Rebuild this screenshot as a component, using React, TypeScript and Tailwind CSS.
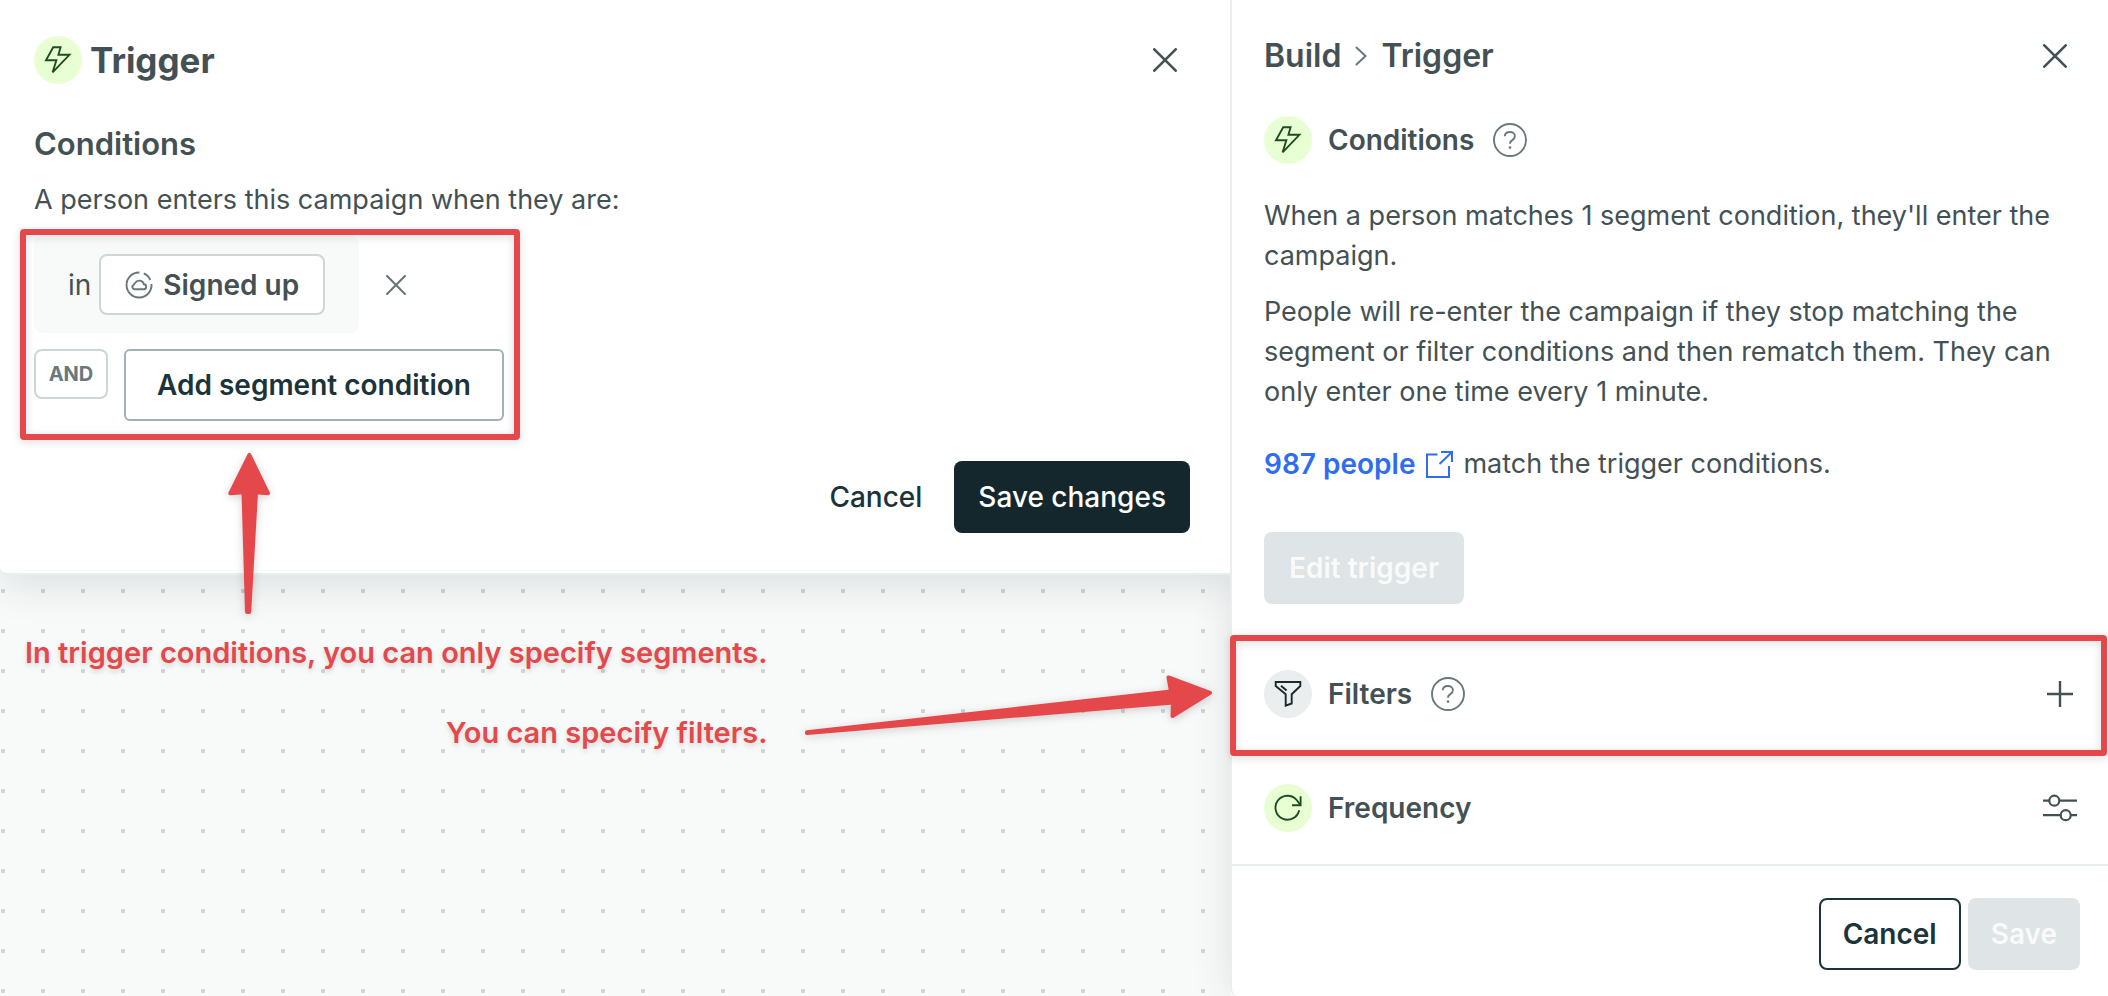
import { useState } from "react";
import type { ReactNode } from "react";

type IconProps = { className?: string };

const CloseIcon = ({ className = "w-6 h-6" }: IconProps) => (
  <svg
    viewBox="0 0 24 24"
    fill="none"
    stroke="currentColor"
    strokeWidth="2.6"
    strokeLinecap="round"
    aria-hidden="true"
    className={className}
  >
    <path d="M1.3 1.3 22.7 22.7M22.7 1.3 1.3 22.7" />
  </svg>
);

const BoltBadge = () => (
  <svg
    viewBox="0 0 48 48"
    fill="none"
    stroke="currentColor"
    strokeWidth="1.9"
    aria-hidden="true"
    className="w-12 h-12 shrink-0 rounded-full bg-[#e8ffd4] text-[#1d4d20]"
  >
    <path d="M19.2 11.2h7.4l-2.2 7.6h11L18.6 36.3l3.8-12H12z" />
  </svg>
);

const FunnelBadge = () => (
  <svg
    viewBox="0 0 48 48"
    fill="none"
    stroke="currentColor"
    strokeWidth="1.9"
    aria-hidden="true"
    className="w-12 h-12 shrink-0 rounded-full bg-[#eaeeef] text-[#1b2a2e]"
  >
    <path d="M11.7 12h24.6v4l-8.6 8.2v9.3l-6 2.2V24.2L11.7 16z" />
    <path d="m17 15.7 5.6 4.8" />
  </svg>
);

const RefreshBadge = () => (
  <svg
    viewBox="0 0 48 48"
    fill="none"
    stroke="currentColor"
    strokeWidth="1.9"
    aria-hidden="true"
    className="w-12 h-12 shrink-0 rounded-full bg-[#e8ffd4] text-[#1d4d20]"
  >
    <path d="M35.2 26.3A12 12 0 1 1 32.5 15.8L36.4 21" />
    <path d="M36.6 12.3v9H28" />
  </svg>
);

const HelpIcon = () => (
  <svg
    viewBox="0 0 34 34"
    fill="none"
    stroke="currentColor"
    strokeWidth="1.9"
    aria-hidden="true"
    className="w-[34px] h-[34px]"
  >
    <circle cx="17" cy="17" r="16" />
    <path d="M11.8 13.2c.2-2.6 2.300-4.200 5.100-4.200 2.900 0 5 1.700 5 4.100 0 2-1 3-2.500 4-1.700 1-2.400 1.800-2.400 3.200v.5" />
    <circle cx="17" cy="24.6" r="1.3" fill="currentColor" stroke="none" />
  </svg>
);

const SegmentIcon = () => (
  <svg
    viewBox="0 0 28 28"
    fill="none"
    stroke="currentColor"
    strokeWidth="1.9"
    aria-hidden="true"
    className="w-7 h-7"
  >
    <path d="M14.500 1.500A12.500 12.500 0 1 0 26.500 13" />
    <path d="M18.800 2.400A12.500 12.500 0 0 1 25.300 9" />
    <path d="M10 18.200h8.500a2.500 2.500 0 0 0 .4-5 4.800 4.800 0 0 0-8.800-1.200 3 3 0 0 0-1.300 1.800 2.300 2.300 0 0 0 1.200 4.400z" />
  </svg>
);

const ExternalIcon = () => (
  <svg
    viewBox="0 0 28 28"
    fill="none"
    stroke="currentColor"
    strokeWidth="2"
    aria-hidden="true"
    className="w-7 h-7"
  >
    <path d="M12.5 4.5H2V27h22V16" />
    <path d="M16 2h11v10M27 2 14.5 14" />
  </svg>
);

const SlidersIcon = () => (
  <svg
    viewBox="0 0 34 28"
    fill="none"
    stroke="currentColor"
    strokeWidth="2.2"
    aria-hidden="true"
    className="w-[34px] h-7"
  >
    <path d="M0 6.700h6M16.500 6.700H34M0 21.200h17.500M28 21.200h6" />
    <circle cx="11.3" cy="6.7" r="5" />
    <circle cx="22.7" cy="21.2" r="5" />
  </svg>
);

const Annotation = ({ className }: { className: string }) => (
  <div
    className={`absolute pointer-events-none border-6 border-[#e5484b] rounded-sm drop-shadow-[0_2px_4px_rgba(0,0,0,0.15)] ${className}`}
  />
);

const PanelRow = ({
  badge,
  title,
  help,
  children,
}: {
  badge: ReactNode;
  title: string;
  help?: boolean;
  children?: ReactNode;
}) => (
  <div className="flex items-center h-12">
    {badge}
    <h3 className="ml-4 text-[28px] leading-10 font-semibold">{title}</h3>
    {help && (
      <button
        type="button"
        aria-label={`About ${title}`}
        className="ml-[19px] text-[#69787b]"
      >
        <HelpIcon />
      </button>
    )}
    <div className="ml-auto flex items-center">{children}</div>
  </div>
);

const App = () => {
  const [segments, setSegments] = useState(["Signed up"]);

  return (
    <div className="flex min-h-screen overflow-hidden bg-white font-['Inter',sans-serif] text-[28px] leading-10 text-[#445154]">
      {/* Canvas with the trigger editor on top */}
      <main className="relative flex-1 min-w-0 overflow-hidden bg-[#f8faf9] bg-[radial-gradient(circle,#ccd6d9_2px,transparent_2.5px)] bg-size-[40px_40px] bg-position-[-17px_11px]">
        <section className="relative z-10 bg-white border-b-2 border-[#ebeeef] rounded-bl-lg px-[34px] pt-9 pb-10 shadow-[0_10px_40px_rgba(30,50,60,0.13)]">
          <div className="flex items-center h-12">
            <BoltBadge />
            <h1 className="ml-2 text-[35px] leading-12 font-bold">Trigger</h1>
            <button
              type="button"
              aria-label="Close editor"
              className="ml-auto mr-[19px]"
            >
              <CloseIcon />
            </button>
          </div>

          <h2 className="mt-10 text-[31px] leading-10 font-semibold">
            Conditions
          </h2>
          <p className="mt-4 text-[27px]">
            A person enters this campaign when they are:
          </p>

          <div className="relative w-fit mt-4">
            {segments.map((segment) => (
              <div key={segment} className="flex items-center mb-4">
                <div className="flex items-center bg-[#f8faf9] rounded-lg px-[34px] py-[18px]">
                  <span>in</span>
                  <button
                    type="button"
                    className="flex items-center h-[61px] ml-2 px-6 bg-white border-2 border-[#ccd6d9] rounded-lg font-semibold"
                  >
                    <span className="mr-[10px] text-[#69787b]">
                      <SegmentIcon />
                    </span>
                    {segment}
                  </button>
                </div>
                <button
                  type="button"
                  aria-label={`Remove ${segment}`}
                  onClick={() =>
                    setSegments(segments.filter((s) => s !== segment))
                  }
                  className="ml-[27px] text-[#69787b]"
                >
                  <CloseIcon className="w-5 h-5" />
                </button>
              </div>
            ))}
            <div className="flex items-start">
              <span className="flex items-center justify-center w-[74px] h-[50px] border-2 border-[#ccd6d9] rounded-lg text-[20px] font-bold text-[#69787b]">
                AND
              </span>
              <button
                type="button"
                className="h-18 ml-4 px-[31px] bg-white border-2 border-[#a3b1b4] rounded-md font-semibold text-[#1a343a]"
              >
                Add segment condition
              </button>
            </div>
            <Annotation className="-left-[14px] -right-4 -top-[7px] -bottom-[19px]" />
          </div>

          <div className="flex justify-end mt-10 mr-[6px]">
            <button
              type="button"
              className="h-18 px-6 mr-2 font-medium text-[#1a343a]"
            >
              Cancel
            </button>
            <button
              type="button"
              className="h-18 px-6 rounded-lg bg-[#13272c] font-medium text-white"
            >
              Save changes
            </button>
          </div>
        </section>

        <div className="relative w-fit mt-[38px] ml-[25px] text-right text-[29px] leading-20 font-semibold text-[#e5484b] text-shadow-[0_3px_5px_rgba(0,0,0,0.15)]">
          <p>In trigger conditions, you can only specify segments.</p>
          <p>You can specify filters.</p>
        </div>

        {/* Callout arrows */}
        <svg
          viewBox="0 0 50 170"
          fill="#e5484b"
          stroke="#e5484b"
          strokeWidth="4"
          strokeLinejoin="round"
          aria-hidden="true"
          className="absolute z-20 left-[224px] top-[448px] w-[50px] h-[170px] drop-shadow-[0_2px_4px_rgba(0,0,0,0.18)]"
        >
          <path d="M25.4 7 44 45.3l-12-1L25.2 164H23L19.500 44.300l-13.200 1z" />
        </svg>
        <svg
          viewBox="0 0 420 70"
          fill="#e5484b"
          stroke="#e5484b"
          strokeWidth="4"
          strokeLinejoin="round"
          aria-hidden="true"
          className="absolute z-20 left-[800px] top-[665px] w-[420px] h-[70px] drop-shadow-[0_2px_4px_rgba(0,0,0,0.18)]"
        >
          <path d="M7 67.2 371 26.500l-2.500-14L410 27.800 372.500 51l.5-13.500L7 68z" />
        </svg>
      </main>

      {/* Workflow side panel */}
      <aside className="relative flex flex-col w-[878px] shrink-0 bg-white border-l-2 border-[#ebeeef] rounded-bl-lg shadow-[0_0_40px_rgba(30,50,60,0.12)]">
        <div className="pl-8 pr-7 pt-8 pb-[33px]">
          <div className="flex items-center h-12 font-semibold text-[32px]">
            <span>Build</span>
            <svg
              viewBox="0 0 12 20"
              fill="none"
              stroke="currentColor"
              strokeWidth="2"
              strokeLinecap="round"
              aria-hidden="true"
              className="w-3 h-5 mx-[14px] text-[#69787b]"
            >
              <path d="m1.500 1.500 9 8.500-9 8.500" />
            </svg>
            <span>Trigger</span>
            <button
              type="button"
              aria-label="Close panel"
              className="ml-auto mr-[13px]"
            >
              <CloseIcon />
            </button>
          </div>

          <div className="mt-9">
            <PanelRow badge={<BoltBadge />} title="Conditions" help />
          </div>
          <div className="text-[27px]">
            <p className="mt-8">
              When a person matches 1 segment condition, they'll enter the
              campaign.
            </p>
            <p className="mt-4">
              People will re-enter the campaign if they stop matching the
              segment or filter conditions and then rematch them. They can only
              enter one time every 1 minute.
            </p>
          </div>
          <p className="flex items-center mt-8">
            <a
              href="#people"
              className="flex items-center font-semibold text-[#2f6df0]"
            >
              987 people
              <span className="ml-[10px]">
                <ExternalIcon />
              </span>
            </a>
            <span className="ml-[10px] text-[27px]">
              match the trigger conditions.
            </span>
          </p>
          <button
            type="button"
            disabled
            className="block h-18 mt-12 px-[25px] rounded-lg bg-[#dfe4e6] font-semibold text-[#f9fafa]"
          >
            Edit trigger
          </button>
        </div>

        <div className="relative pl-8 pr-7 py-[33px]">
          <PanelRow badge={<FunnelBadge />} title="Filters" help>
            <button type="button" aria-label="Add filter" className="mr-[7px]">
              <svg
                viewBox="0 0 26 26"
                fill="none"
                stroke="currentColor"
                strokeWidth="2.4"
                aria-hidden="true"
                className="w-[26px] h-[26px]"
              >
                <path d="M13 0v26M0 13h26" />
              </svg>
            </button>
          </PanelRow>
          <Annotation className="-left-[2px] right-px -top-[2px] -bottom-[5px]" />
        </div>

        <div className="pl-8 pr-7 pt-[33px] pb-8 border-b-2 border-[#ebeeef]">
          <PanelRow badge={<RefreshBadge />} title="Frequency">
            <button
              type="button"
              aria-label="Frequency settings"
              className="mr-[3px]"
            >
              <SlidersIcon />
            </button>
          </PanelRow>
        </div>

        <div className="flex justify-end gap-[7px] pt-8 pb-[26px] pr-7">
          <button
            type="button"
            className="h-18 px-[22px] border-2 border-[#1a343a] rounded-lg bg-white font-semibold text-[#1a343a]"
          >
            Cancel
          </button>
          <button
            type="button"
            disabled
            className="h-18 px-[23px] rounded-lg bg-[#dfe4e6] font-semibold text-[#f9fafa]"
          >
            Save
          </button>
        </div>
      </aside>
    </div>
  );
};

export default App;
